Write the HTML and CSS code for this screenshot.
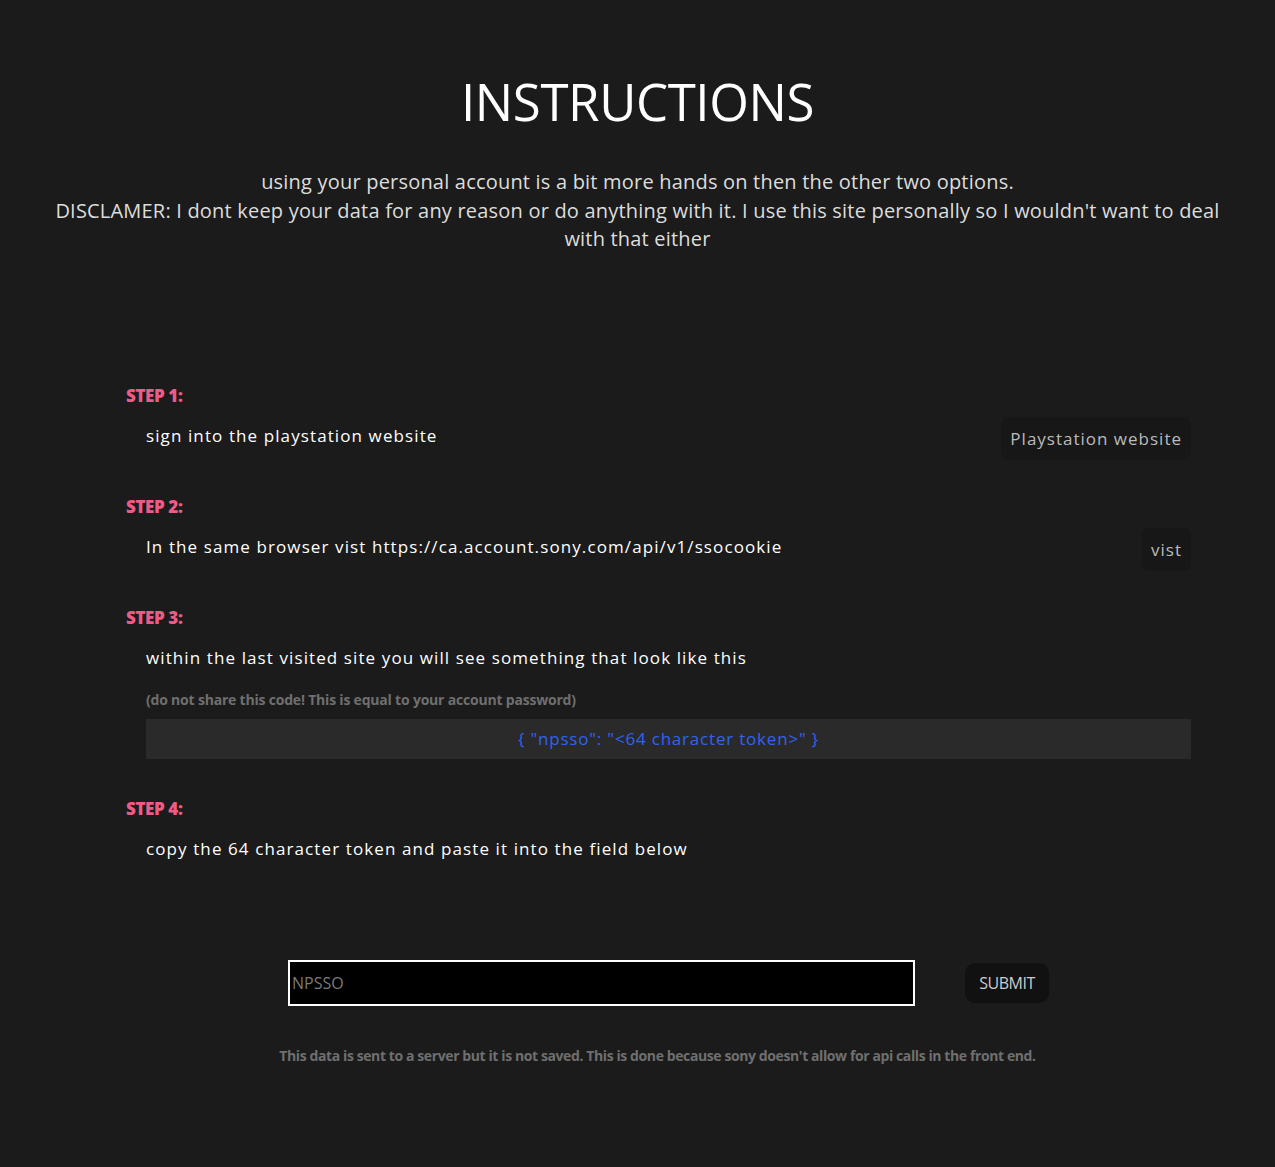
FILE: index.html
```html
<!DOCTYPE html>
<html lang="en">
<head>
    <meta charset="UTF-8">
    <meta name="viewport" content="width=device-width, initial-scale=1.0">
    <title>Instructions</title>
    <link rel="stylesheet" href="styles.css">
</head>
<body>
    <div class="intro">
        <h1>INSTRUCTIONS</h1>
        <p>using your personal account is a bit more hands on then the other two options.<br>
        DISCLAMER: I dont keep your data for any reason or do anything with it. I use this site personally so I wouldn't want to deal with that either</p>
    </div>

    <div class="steps">
        <div class="step">
            <h3>STEP 1:</h3>
            <div class="step-row">
                <span>sign into the playstation website</span>
                <a class="step-btn" href="#">Playstation website</a>
            </div>
        </div>
        <div class="step">
            <h3>STEP 2:</h3>
            <div class="step-row">
                <span>In the same browser vist https://ca.account.sony.com/api/v1/ssocookie</span>
                <a class="step-btn" href="#">vist</a>
            </div>
        </div>
        <div class="step">
            <h3>STEP 3:</h3>
            <div class="step-row">
                <span>within the last visited site you will see something that look like this</span>
            </div>
            <p class="warning">(do not share this code! This is equal to your account password)</p>
            <div class="code">{ "npsso": "&lt;64 character token&gt;" }</div>
        </div>
        <div class="step">
            <h3>STEP 4:</h3>
            <div class="step-row">
                <span>copy the 64 character token and paste it into the field below</span>
            </div>
        </div>
    </div>

    <form class="token-form" id="tokenForm">
        <input type="text" id="npsso" name="npsso" placeholder="NPSSO">
        <button type="submit">SUBMIT</button>
    </form>
    <p class="note">This data is sent to a server but it is not saved. This is done because sony doesn't allow for api calls in the front end.</p>
</body>
</html>
```

FILE: styles.css
```css
body {
    font-family: "Open Sans", "DejaVu Sans", sans-serif;
    background-color: #1b1b1b;
    color: #fff;
    margin: 0;
    padding: 0;
}
.intro {
    text-align: center;
    padding: 66px 50px 0 50px;
}
.intro h1 {
    font-size: 51px;
    font-weight: 400;
    margin: 0 0 32px 0;
    letter-spacing: -0.4px;
}
.intro p {
    font-size: 20px;
    line-height: 28.5px;
    color: #ddd;
    margin: 0;
    letter-spacing: 0.2px;
}
.steps {
    margin: 130px 84px 0 126px;
}
.step {
    margin-bottom: 35px;
}
.step h3 {
    color: #ef5b86;
    font-size: 17px;
    font-weight: 800;
    margin: 0 0 10px 0;
    letter-spacing: -0.4px;
}
.step-row {
    display: flex;
    justify-content: space-between;
    align-items: center;
    padding-left: 20px;
    min-height: 43px;
    font-size: 17px;
    letter-spacing: 1.1px;
}
.step-row span {
    padding-bottom: 6px;
}
.step-btn {
    background-color: #171717;
    color: #bbb;
    text-decoration: none;
    padding: 10px 9px;
    border-radius: 8px;
    font-size: 17px;
    letter-spacing: 1px;
}
.warning {
    margin: 8px 0 10px 20px;
    font-size: 14px;
    font-weight: 700;
    color: #6f6f6f;
    letter-spacing: -0.2px;
}
.code {
    margin-left: 20px;
    margin-bottom: 38px;
    background-color: #2a2a2a;
    color: #2f63f3;
    text-align: center;
    font-size: 17px;
    line-height: 40px;
    letter-spacing: 0.8px;
}
.token-form {
    display: flex;
    justify-content: center;
    align-items: center;
    gap: 50px;
    margin-top: 87px;
    padding-left: 62px;
}
.token-form input {
    width: 627px;
    height: 46px;
    box-sizing: border-box;
    background-color: #000;
    border: 2px solid #fff;
    color: #fff;
    padding: 0 2px;
    font-family: "Liberation Sans Narrow", "Open Sans", sans-serif;
    font-size: 16px;
}
.token-form input::placeholder {
    color: #7a7a7a;
}
.token-form button {
    background-color: #111;
    color: #ccc;
    border: none;
    border-radius: 10px;
    width: 84px;
    height: 40px;
    font-family: "Open Sans", sans-serif;
    font-size: 16px;
    letter-spacing: -0.5px;
    cursor: pointer;
}
.note {
    text-align: center;
    margin: 40px 0 0 40px;
    font-size: 14px;
    font-weight: 700;
    color: #6f6f6f;
    letter-spacing: -0.4px;
    padding-bottom: 100px;
}
```
